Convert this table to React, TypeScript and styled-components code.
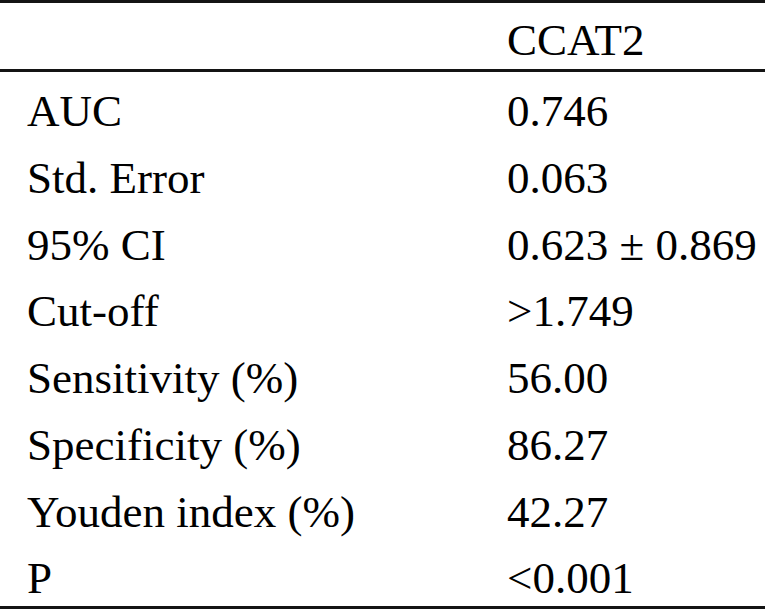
import React from "react";
import styled, { createGlobalStyle } from "styled-components";

const GlobalStyle = createGlobalStyle`
  html, body {
    margin: 0;
    padding: 0;
    background: #ffffff;
  }
  body {
    font-family: "Liberation Serif", "Times New Roman", serif;
    color: #000000;
  }
`;

const Table = styled.div`
  width: 765px;
  border-top: 3px solid #141414;
  border-bottom: 3px solid #141414;
  font-family: "Liberation Serif", "Times New Roman", serif;
  font-size: 45px;
  line-height: 43px;
  color: #000;
`;

const Row = styled.div<{ $head?: boolean }>`
  display: grid;
  grid-template-columns: 507px 1fr;
  box-sizing: border-box;
  height: ${(p) => (p.$head ? "69px" : "66.75px")};
  padding-top: ${(p) => (p.$head ? "16px" : "18px")};
  border-bottom: ${(p) => (p.$head ? "3px solid #141414" : "none")};
`;

const Label = styled.div`
  padding-left: 27px;
  white-space: nowrap;
`;

const Value = styled.div`
  white-space: nowrap;
`;

const rows: [string, string][] = [
  ["AUC", "0.746"],
  ["Std. Error", "0.063"],
  ["95% CI", "0.623 ± 0.869"],
  ["Cut-off", ">1.749"],
  ["Sensitivity (%)", "56.00"],
  ["Specificity (%)", "86.27"],
  ["Youden index (%)", "42.27"],
  ["P", "<0.001"],
];

export default function App() {
  return (
    <>
      <GlobalStyle />
      <Table>
        <Row $head>
          <Label />
          <Value>CCAT2</Value>
        </Row>
        {rows.map(([l, v]) => (
          <Row key={l}>
            <Label>{l}</Label>
            <Value>{v}</Value>
          </Row>
        ))}
      </Table>
    </>
  );
}
